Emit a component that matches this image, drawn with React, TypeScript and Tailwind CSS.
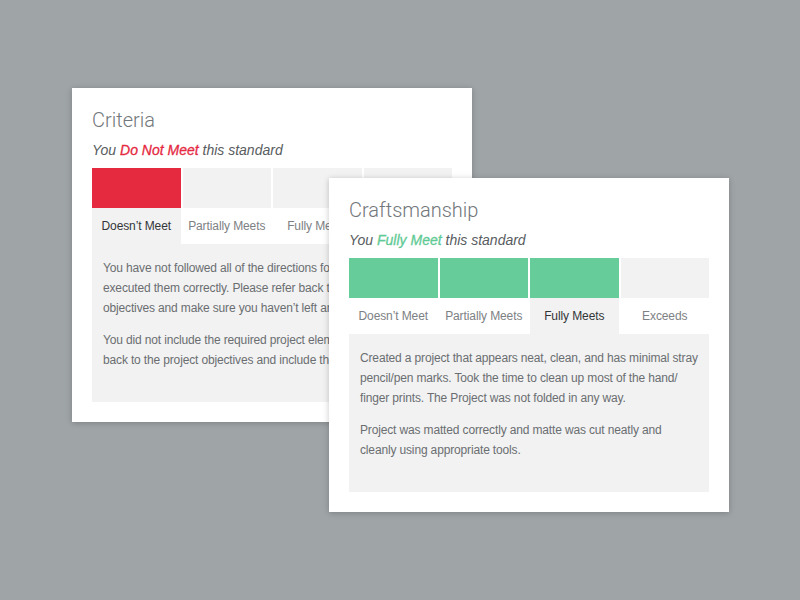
import React from "react";

const levels = ["Doesn’t Meet", "Partially Meets", "Fully Meets", "Exceeds"];

interface CardProps {
  title: string;
  verdict: string;
  level: number;
  tone: "red" | "green";
  paragraphs: string[];
  className?: string;
}

const RubricCard: React.FC<CardProps> = ({ title, verdict, level, tone, paragraphs, className = "" }) => {
  const fill = tone === "red" ? "bg-[#e5293f]" : "bg-[#66cc99]";
  const ink = tone === "red" ? "text-[#e5293f]" : "text-[#5fca95]";

  return (
    <div className={`w-[400px] h-[334px] bg-white p-5 shadow-[0_1px_6px_rgba(0,0,0,0.22)] ${className}`}>
      <h2
        className="text-[20px] leading-6 text-[#72777b] font-light"
        style={{ fontFamily: 'Roboto, "Liberation Sans", sans-serif' }}
      >
        {title}
      </h2>
      <p className="mt-2 text-[14px] leading-5 italic text-[#585c60]">
        You <span className={`${ink} [-webkit-text-stroke:0.3px]`}>{verdict}</span> this standard
      </p>

      {/* meter */}
      <div className="mt-2 grid grid-cols-4 gap-[2px] h-10">
        {levels.map((l, i) => (
          <div key={l} className={i <= level ? fill : "bg-[#f2f2f2]"} />
        ))}
      </div>

      <div className="grid grid-cols-4 gap-[2px] h-9">
        {levels.map((l, i) => (
          <div
            key={l}
            className={`flex items-center justify-center text-[12px] tracking-[-0.1px] ${
              i === level ? "bg-[#f2f2f2] text-[#333639]" : "bg-white text-[#7d8184]"
            }`}
          >
            {l}
          </div>
        ))}
      </div>

      <div className="h-[158px] bg-[#f2f2f2] pl-[11px] pr-2 pt-[14px] text-[12px] tracking-[-0.15px] leading-5 text-[#6a6e71] flex flex-col gap-3">
        {paragraphs.map((p, i) => (
          <p key={i}>{p}</p>
        ))}
      </div>
    </div>
  );
};

export default function App() {
  return (
    <div
      className="relative w-[800px] h-[600px] bg-[#9fa4a6] overflow-hidden"
      style={{ fontFamily: '"Liberation Sans", Arial, sans-serif' }}
    >
      <RubricCard
        className="absolute left-[72px] top-[88px]"
        title="Criteria"
        verdict="Do Not Meet"
        level={0}
        tone="red"
        paragraphs={[
          "You have not followed all of the directions for this project or not executed them correctly. Please refer back to the project objectives and make sure you haven’t left anything out.",
          "You did not include the required project elements. Please refer back to the project objectives and include them.",
        ]}
      />
      <RubricCard
        className="absolute left-[329px] top-[178px]"
        title="Craftsmanship"
        verdict="Fully Meet"
        level={2}
        tone="green"
        paragraphs={[
          "Created a project that appears neat, clean, and has minimal stray pencil/pen marks. Took the time to clean up most of the hand/ finger prints. The Project was not folded in any way.",
          "Project was matted correctly and matte was cut neatly and cleanly using appropriate tools.",
        ]}
      />
    </div>
  );
}
